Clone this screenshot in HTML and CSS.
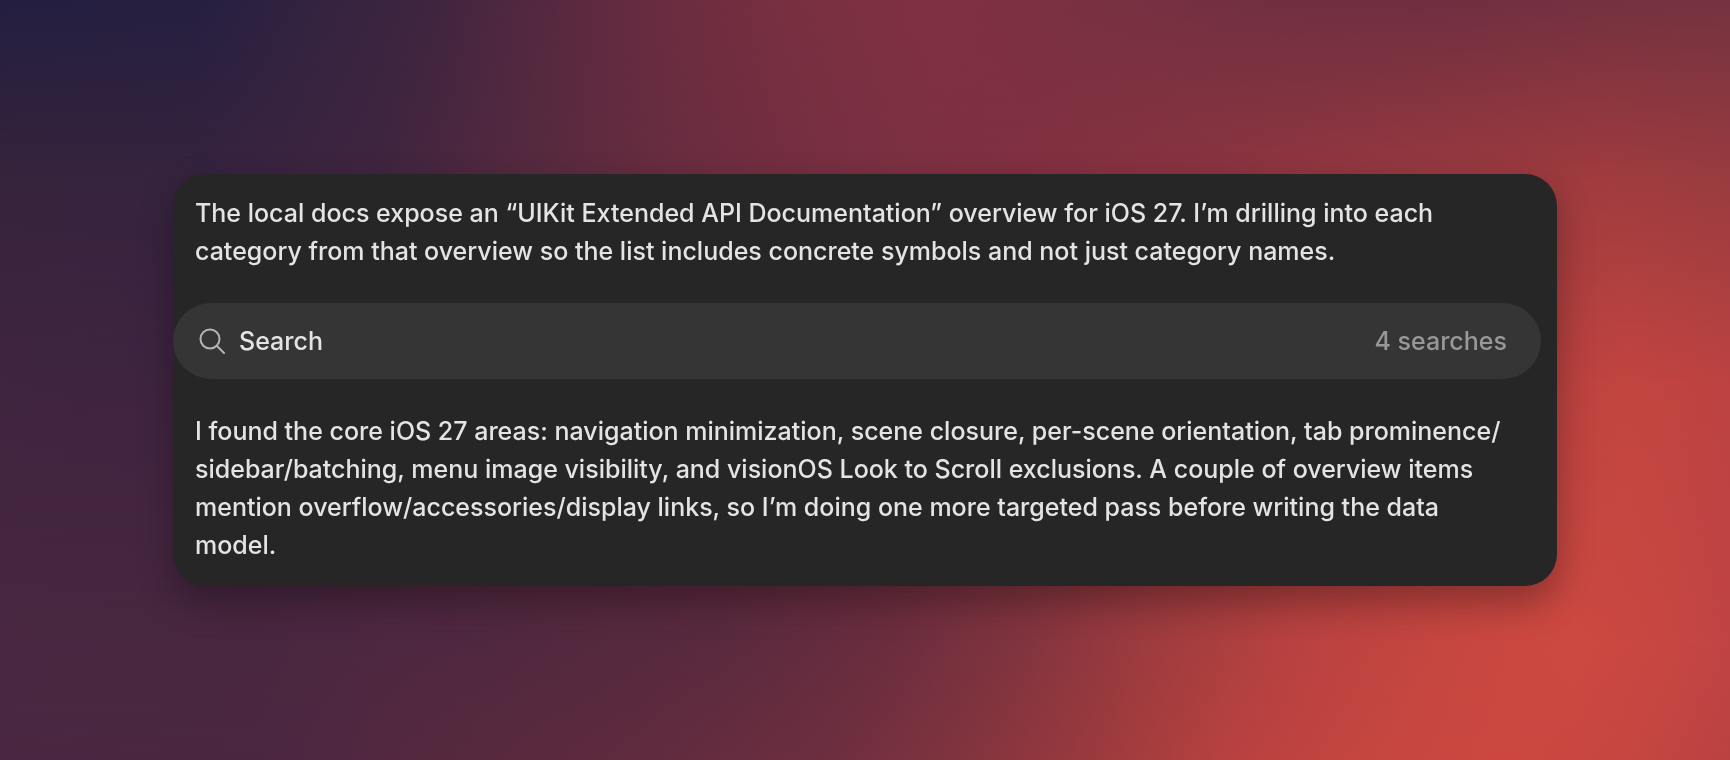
FILE: index.html
```
<!DOCTYPE html>
<html lang="en">
<head>
  <meta charset="UTF-8" />
  <meta name="viewport" content="width=device-width, initial-scale=1.0" />
  <title>UIKit docs search</title>
  <link rel="stylesheet" href="styles.css">
</head>
<body>
  <div class="wallpaper">
    <div class="band top"></div>
    <div class="band upper"></div>
    <div class="band middle"></div>
    <div class="band lower"></div>
  </div>

  <main class="card">
    <p class="message">The local docs expose an “UIKit Extended API Documentation” overview for iOS 27. I’m drilling into each category from that overview so the list includes concrete symbols and not just category names.</p>

    <button class="search-row" type="button">
      <svg class="icon" viewBox="0 0 26 26" aria-hidden="true">
        <circle cx="11" cy="11" r="9.5" />
        <path d="M18 18 L25 25" />
      </svg>
      <span class="label">Search</span>
      <span class="count">4 searches</span>
    </button>

    <p class="message">I found the core iOS 27 areas: navigation minimization, scene closure, per-scene orientation, tab prominence/<wbr>sidebar/batching, menu image visibility, and visionOS Look to Scroll exclusions. A couple of overview items mention overflow/accessories/display links, so I’m doing one more targeted pass before writing the data model.</p>
  </main>
</body>
</html>
```
FILE: styles.css
```
* {
  box-sizing: border-box;
}
body {
  margin: 0;
  min-height: 100vh;
  padding: 24px 10%;
  display: flex;
  align-items: center;
  font-family: Inter, "Liberation Sans", sans-serif;
  font-size: 25px;
  font-weight: 500;
  line-height: 38px;
  color: #e4e4e4;
}

/* wallpaper: horizontal colour bands, each fading into the one below */
.wallpaper {
  position: fixed;
  inset: 0;
  z-index: -1;
  background: linear-gradient(to right, #4a2742 0%, #4b2741 15%, #56293f 25%, #602b3f 37%, #6e2f40 48%, #80343f 55%, #9e3b3e 64%, #b84240 71%, #c64640 79%, #cd4841 87%, #c74641 94%, #ba4341 100%);
}
.band {
  position: absolute;
  inset: 0;
}
.top {
  z-index: 4;
  background: linear-gradient(to right, #241f40 0%, #261f40 11%, #302341 17%, #40253f 25%, #572940 32%, #6c2d40 39%, #78303f 46%, #813042 54%, #783140 63%, #703040 73%, #6e2f40 82%, #733140 92%, #743340 100%);
  mask-image: linear-gradient(to bottom, #000 0%, transparent 22%);
}
.upper {
  z-index: 3;
  background: linear-gradient(to right, #35233c 0%, #35233f 12%, #40253f 22%, #572a3f 31%, #6c2d40 40%, #7a3042 50%, #823041 60%, #8a3441 70%, #943840 81%, #9e3b3e 93%, #973b40 100%);
  mask-image: linear-gradient(to bottom, #000 22%, transparent 50%);
}
.middle {
  z-index: 2;
  background: linear-gradient(to right, #40253f 0%, #3f2440 9%, #4c2740 25%, #642b40 45%, #8a353f 70%, #b6413f 88%, #c24540 94%, #bc4341 100%);
  mask-image: linear-gradient(to bottom, #000 50%, transparent 84%);
}
.lower {
  z-index: 1;
  background: linear-gradient(to right, #482742 0%, #49273f 15%, #50283f 28%, #5a2a3e 42%, #6a2d3e 51%, #80343f 59%, #9c3b3e 66%, #b84240 75%, #c54640 83%, #cd4941 91%, #c84642 96%, #c04444 100%);
  mask-image: linear-gradient(to bottom, #000 84%, transparent 100%);
}

.card {
  flex: 1;
  padding: 20px 0 22px;
  background: #262626;
  border-radius: 32px;
  box-shadow: 0 16px 36px rgba(0, 0, 0, 0.3);
}
.message {
  margin: 0;
  padding: 0 40px 0 22px;
}
.search-row {
  display: flex;
  align-items: center;
  gap: 14px;
  width: calc(100% - 16px);
  height: 76px;
  margin: 33px 0;
  padding: 0 34px 0 26px;
  background: #353535;
  border: none;
  border-radius: 38px;
  font: inherit;
  color: inherit;
  text-align: left;
  cursor: pointer;
}
.icon {
  width: 26px;
  height: 26px;
  fill: none;
  stroke: #b4b4b4;
  stroke-width: 2;
  stroke-linecap: round;
}
.count {
  margin-left: auto;
  color: #989898;
}
```
